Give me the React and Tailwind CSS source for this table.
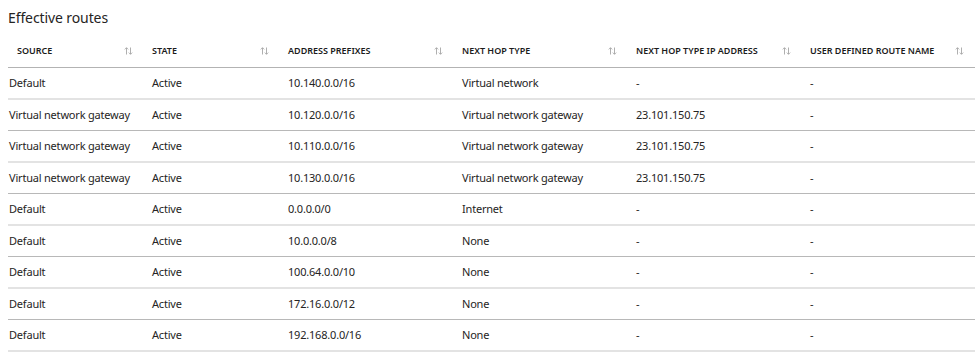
import React from "react";

const cols = [
  { key: "SOURCE", w: "w-[136px]" },
  { key: "STATE", w: "w-[136px]" },
  { key: "ADDRESS PREFIXES", w: "w-[174px]" },
  { key: "NEXT HOP TYPE", w: "w-[174px]" },
  { key: "NEXT HOP TYPE IP ADDRESS", w: "w-[174px]" },
  { key: "USER DEFINED ROUTE NAME", w: "w-[173px]" },
];

const rows = [
  ["Default", "Active", "10.140.0.0/16", "Virtual network", "-", "-"],
  ["Virtual network gateway", "Active", "10.120.0.0/16", "Virtual network gateway", "23.101.150.75", "-"],
  ["Virtual network gateway", "Active", "10.110.0.0/16", "Virtual network gateway", "23.101.150.75", "-"],
  ["Virtual network gateway", "Active", "10.130.0.0/16", "Virtual network gateway", "23.101.150.75", "-"],
  ["Default", "Active", "0.0.0.0/0", "Internet", "-", "-"],
  ["Default", "Active", "10.0.0.0/8", "None", "-", "-"],
  ["Default", "Active", "100.64.0.0/10", "None", "-", "-"],
  ["Default", "Active", "172.16.0.0/12", "None", "-", "-"],
  ["Default", "Active", "192.168.0.0/16", "None", "-", "-"],
];

function SortIcon() {
  return (
    <svg width="9" height="8" viewBox="0 0 9 8" className="shrink-0" fill="none" stroke="#a6a6a6" strokeWidth="0.9">
      <path d="M2.5 7.5V0.8M0.8 2.4L2.5 0.7L4.2 2.4" />
      <path d="M6.5 0.5V7.2M4.8 5.6L6.5 7.3L8.2 5.6" />
    </svg>
  );
}

export default function App() {
  return (
    <div className="w-[979px] h-[362px] bg-white text-[#252423] overflow-hidden" style={{ fontFamily: '"Segoe UI", "Noto Sans", "Open Sans", sans-serif' }}>
      <div className="pl-[8px] pt-[7px] h-[35px] text-[14px] leading-[22px] tracking-[-0.1px]">Effective routes</div>
      <div className="ml-[8px] w-[967px]">
        <div className="flex h-[33px] border-b border-[#b3b3b3] items-center">
          {cols.map((c, i) => (
            <div key={c.key} className={`${c.w} flex items-center ${i === 0 ? "pl-[9px]" : "pl-[8px]"} pr-[11px]`}>
              <span className="text-[9px] font-semibold text-[#1b1b1b]">{c.key}</span>
              <span className="ml-auto"><SortIcon /></span>
            </div>
          ))}
        </div>
        {rows.map((r, ri) => (
          <div
            key={ri}
            className={`flex items-center h-[30px] box-content ${ri % 2 === 0 ? "border-b-2 border-[#e3e3e3]" : "border-b border-[#b8b8b8]"}`}
          >
            {r.map((v, ci) => (
              <div key={ci} className={`${cols[ci].w} ${ci === 0 ? "pl-[1px]" : "pl-[8px]"} text-[11px] tracking-[-0.2px] whitespace-nowrap`}>
                {v}
              </div>
            ))}
          </div>
        ))}
      </div>
    </div>
  );
}
